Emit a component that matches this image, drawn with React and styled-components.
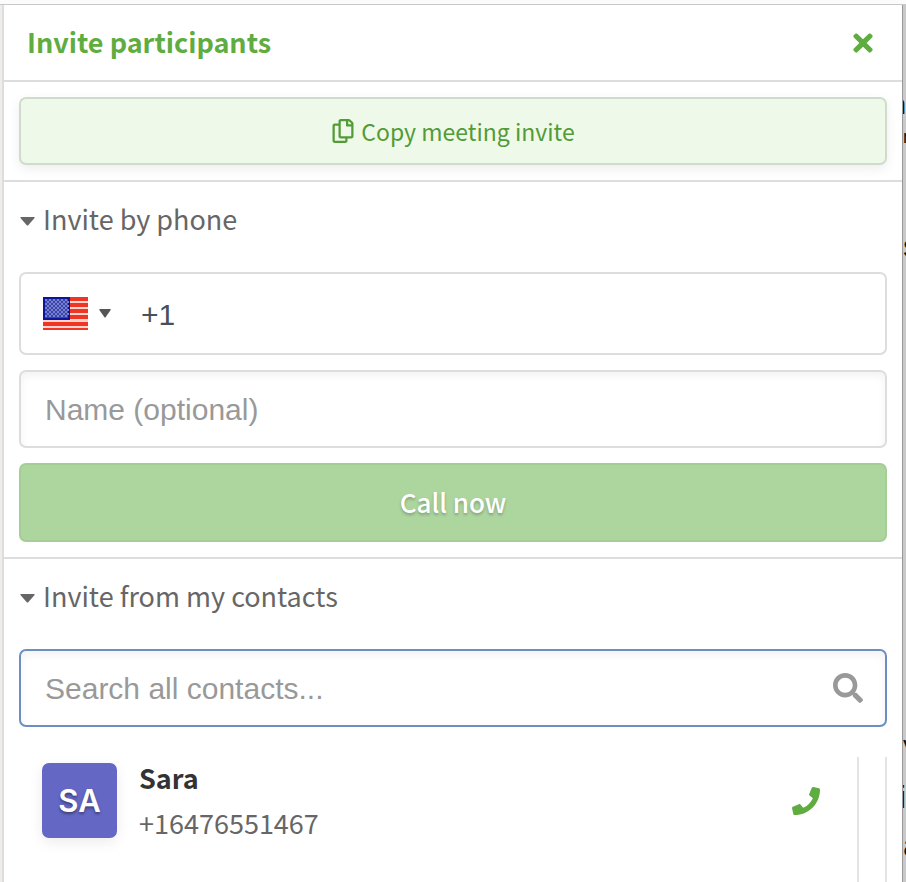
import React from "react";
import styled, { createGlobalStyle, css } from "styled-components";
import { FaTimes, FaRegCopy, FaSearch, FaPhone } from "react-icons/fa";

const GlobalStyle = createGlobalStyle`
  *, *::before, *::after { box-sizing: border-box; }
  body {
    margin: 0;
    background: #fff;
    color: #666;
    font-family: "Noto Sans CJK SC", "Open Sans", sans-serif;
  }
  button, input { font: inherit; margin: 0; }
  h1, h2, p, ul { margin: 0; padding: 0; }
`;

const Shell = styled.div`
  display: flex;
  flex-direction: column;
  height: 100vh;
  overflow: hidden;
`;

const TopEdge = styled.div`
  flex: none;
  height: 5px;
  background: #fbfbfb;
  border-bottom: 1px solid #c8c8c8;
`;

const Body = styled.div`
  flex: 1;
  min-height: 0;
  display: flex;
`;

const LeftEdge = styled.div`
  flex: none;
  width: 4px;
  background: #efecea;
  border-right: 2px solid #ddd;
`;

const Panel = styled.main`
  flex: 1;
  min-width: 0;
  background: #fff;
`;

const Backdrop = styled.div`
  flex: none;
  display: flex;
  flex-direction: column;
  width: 4px;
  overflow: hidden;
  background: #c9c9c9;
  border-left: 1px solid #999;
  color: #111;
  font-family: "Liberation Sans", Arial, sans-serif;
`;

const BackdropText = styled.span`
  flex: none;
  display: flex;
  justify-content: ${(p) => (p.$end ? "flex-end" : "flex-start")};
  height: ${(p) => p.$line}px;
  margin-top: ${(p) => p.$gap}px;
  font-size: ${(p) => p.$size}px;
  line-height: ${(p) => p.$line}px;
`;

const Header = styled.header`
  display: flex;
  align-items: center;
  justify-content: space-between;
  height: 77px;
  padding: 0 25px 0 23px;
  border-bottom: 2px solid #ddd;
`;

const Title = styled.h1`
  padding-bottom: 2px;
  color: #5fac40;
  font-size: 27px;
  line-height: 40px;
  font-weight: 700;
`;

const IconButton = styled.button`
  display: flex;
  padding: 0;
  border: 0;
  background: none;
  color: #5fac40;
  font-size: 28px;
  cursor: pointer;
`;

const Section = styled.section`
  display: flex;
  flex-direction: column;
  gap: 15px;
  padding: 15px;
  border-bottom: 2px solid #ddd;
  &:last-child { border-bottom: 0; padding-bottom: 0; }
`;

const boxShape = css`
  border: 2px solid #ddd;
  border-radius: 7px;
`;

const CopyButton = styled.button`
  ${boxShape}
  display: flex;
  align-items: center;
  justify-content: center;
  gap: 6px;
  height: 68px;
  padding: 0;
  border-color: #cfdccb;
  background: #eef9e9;
  color: #529b36;
  font-size: 23px;
  line-height: 36px;
  box-shadow: 0 4px 12px rgba(0, 0, 0, 0.07);
  cursor: pointer;
  svg { font-size: 24px; }
`;

const SectionToggle = styled.button`
  display: flex;
  align-items: center;
  gap: 8px;
  height: 48px;
  margin-bottom: 12px;
  padding: 0 0 0 1px;
  border: 0;
  background: none;
  color: #666;
  font-size: 27px;
  line-height: 40px;
  text-align: left;
  cursor: pointer;
`;

const ToggleLabel = styled.span`
  padding-bottom: 4px;
`;

const Caret = styled.svg`
  flex: none;
  width: ${(p) => p.$width}px;
  height: 9px;
  fill: currentColor;
`;

const Field = styled.div`
  ${boxShape}
  display: flex;
  align-items: center;
  height: ${(p) => (p.$tall ? 83 : 78)}px;
  padding: 0 22px 0 ${(p) => (p.$tall ? 22 : 24)}px;
  border-color: ${(p) => (p.$active ? "#6a8fc0" : "#ddd")};
  box-shadow: ${(p) => (p.$tall ? "none" : "inset 0 4px 8px rgba(0, 0, 0, 0.05)")};
  color: #999;
  font-size: 30px;
`;

const TextInput = styled.input`
  flex: 1;
  min-width: 0;
  padding: 2px 0 0;
  border: 0;
  outline: 0;
  background: none;
  color: #495057;
  font-family: "Liberation Sans", Arial, sans-serif;
  font-size: 30px;
  line-height: 40px;
  &::placeholder { color: #999; opacity: 1; }
`;

const CountryButton = styled.button`
  display: flex;
  align-items: center;
  gap: 11px;
  margin-right: 30px;
  padding: 0;
  border: 0;
  background: none;
  color: #555;
  cursor: pointer;
`;

const CallButton = styled.button`
  ${boxShape}
  height: 79px;
  padding: 0 0 2px;
  border-color: #a5cd96;
  background: #add59e;
  color: #fff;
  font-size: 26px;
  line-height: 40px;
  font-weight: 500;
  text-shadow: 0 2px 3px rgba(0, 0, 0, 0.25);
`;

const ContactList = styled.ul`
  display: flex;
  height: 140px;
  margin-top: 15px;
  border-right: 2px solid #e4e4e4;
  list-style: none;
`;

const Contact = styled.li`
  flex: 1;
  display: flex;
  align-items: flex-start;
  gap: 22px;
  margin-right: 26px;
  padding: 6px 37px 0 23px;
  border-right: 2px solid #e4e4e4;
`;

const Avatar = styled.div`
  display: flex;
  align-items: center;
  justify-content: center;
  width: 75px;
  height: 75px;
  border-radius: 7px;
  background: #6468c4;
  color: #fff;
  font-family: Inter, sans-serif;
  font-size: 31px;
  font-weight: 600;
  text-shadow: 0 2px 3px rgba(0, 0, 0, 0.4);
  box-shadow: 0 4px 14px rgba(0, 0, 0, 0.08);
`;

const ContactText = styled.div`
  flex: 1;
  margin-top: -8px;
`;

const ContactName = styled.p`
  color: #333;
  font-size: 27px;
  line-height: 45px;
  font-weight: 700;
`;

const ContactPhone = styled.p`
  font-size: 27px;
  line-height: 45px;
`;

const CallIcon = styled(IconButton)`
  margin-top: 24px;
`;

const DownCaret = ({ width }) => (
  <Caret $width={width} viewBox="0 0 16 9" preserveAspectRatio="none" aria-hidden="true">
    <path d="M1 0h14q1 0 .5 1L9 8q-1 1-2 0L.5 1Q0 0 1 0z" />
  </Caret>
);

const Flag = () => (
  <svg width="45" height="33" viewBox="0 0 45 33" aria-hidden="true">
    <rect width="45" height="33" fill="#ffd5d0" />
    {[0, 6, 12, 18, 25, 31].map((y) => (
      <rect key={y} y={y} width="45" height={y === 31 ? 2 : 4} fill="#f03524" />
    ))}
    <rect width="27" height="23" fill="#0b159c" />
    <rect x="2" y="2" width="23" height="19" fill="#3a44ad" />
    {Array.from({ length: 9 }, (_, r) =>
      Array.from({ length: 6 }, (_, c) => (
        <rect key={`${r}-${c}`} x={2 + c * 4 + (r % 2) * 2} y={2 + r * 2} width="2" height="2" fill="#7880cc" />
      ))
    )}
  </svg>
);

export default function App() {
  return (
    <>
      <GlobalStyle />
      <Shell>
        <TopEdge />
        <Body>
          <LeftEdge />
          <Panel>
            <Header>
              <Title>Invite participants</Title>
              <IconButton aria-label="Close"><FaTimes /></IconButton>
            </Header>
            <Section>
              <CopyButton><FaRegCopy />Copy meeting invite</CopyButton>
            </Section>
            <Section>
              <SectionToggle aria-expanded="true">
                <DownCaret width={15} />
                <ToggleLabel>Invite by phone</ToggleLabel>
              </SectionToggle>
              <Field $tall>
                <CountryButton aria-label="Country: United States"><Flag /><DownCaret width={12} /></CountryButton>
                <TextInput type="tel" aria-label="Phone number" defaultValue="+1" />
              </Field>
              <Field><TextInput aria-label="Name" placeholder="Name (optional)" /></Field>
              <CallButton>Call now</CallButton>
            </Section>
            <Section>
              <SectionToggle aria-expanded="true">
                <DownCaret width={15} />
                <ToggleLabel>Invite from my contacts</ToggleLabel>
              </SectionToggle>
              <Field $active>
                <TextInput type="text" aria-label="Search all contacts" placeholder="Search all contacts..." />
                <FaSearch />
              </Field>
              <ContactList>
                <Contact>
                  <Avatar>SA</Avatar>
                  <ContactText>
                    <ContactName>Sara</ContactName>
                    <ContactPhone>+16476551467</ContactPhone>
                  </ContactText>
                  <CallIcon aria-label="Call Sara"><FaPhone /></CallIcon>
                </Contact>
              </ContactList>
            </Section>
          </Panel>
          <Backdrop aria-hidden="true">
            <BackdropText $gap={86} $size={27} $line={28} $end>n</BackdropText>
            <BackdropText $gap={8} $size={18} $line={20}>r</BackdropText>
            <BackdropText $gap={83} $size={32} $line={32}>s</BackdropText>
            <BackdropText $gap={475} $size={24} $line={24}>V</BackdropText>
            <BackdropText $gap={20} $size={32} $line={32} $end>i</BackdropText>
            <BackdropText $gap={16} $size={32} $line={32}>a</BackdropText>
          </Backdrop>
        </Body>
      </Shell>
    </>
  );
}
